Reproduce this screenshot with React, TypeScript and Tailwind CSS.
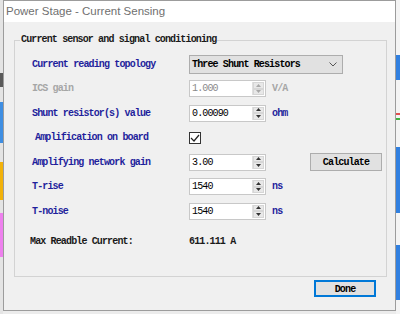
import React from 'react';

const mono = "font-['Liberation_Mono',monospace] text-[10px] tracking-[-0.86px]";

const Spinner: React.FC<{ disabled?: boolean }> = ({ disabled }) => (
  <div className="flex flex-col w-[12px] h-full border-l border-[#e0e0e0]">
    {['up', 'down'].map((dir) => (
      <div key={dir} className="flex-1 flex items-center justify-center bg-[#e8e8e8] border border-[#d6d6d6]">
        <svg width="5" height="3" viewBox="0 0 5 3">
          <path
            d={dir === 'up' ? 'M0 3 L2.5 0 L5 3 Z' : 'M0 0 L2.5 3 L5 0 Z'}
            fill={disabled ? '#a8a8a8' : '#333333'}
          />
        </svg>
      </div>
    ))}
  </div>
);

const NumberBox: React.FC<{ value: string; disabled?: boolean }> = ({ value, disabled }) => (
  <div className="flex w-[77px] h-[17px] bg-white border border-[#c8c8c8] pl-[2px] p-[1px]">
    <div className={`flex-1 flex items-center ${mono} ${disabled ? 'text-[#8a8a8a]' : 'text-black'}`}>{value}</div>
    <Spinner disabled={disabled} />
  </div>
);

const Label: React.FC<{ children: React.ReactNode; tone?: 'blue' | 'gray' | 'black'; indent?: boolean }> = ({ children, tone = 'blue', indent }) => (
  <div
    className={`w-[157px] shrink-0 font-bold ${mono} ${indent ? 'pl-[3px]' : ''} ${
      tone === 'blue' ? 'text-[#1f1f9c]' : tone === 'gray' ? 'text-[#a6a6a6]' : 'text-[#1a1a1a]'
    }`}
  >
    {children}
  </div>
);

const Unit: React.FC<{ children: React.ReactNode; gray?: boolean }> = ({ children, gray }) => (
  <span className={`ml-[6px] font-bold ${mono} ${gray ? 'text-[#a6a6a6]' : 'text-[#1f1f9c]'}`}>{children}</span>
);

const App: React.FC = () => {
  return (
    <div className="w-[400px] h-[314px] flex bg-[#ececec] overflow-hidden">
      {/* desktop behind, left side */}
      <div className="w-[3px] flex flex-col">
        <div className="h-[73px] bg-[#e4e4e4]" />
        <div className="h-[14px] bg-[#5a5a5a]" />
        <div className="h-[15px] bg-[#e4e4e4]" />
        <div className="h-[41px] bg-[#3f8ee2]" />
        <div className="h-[19px] bg-[#e4e4e4]" />
        <div className="h-[38px] bg-[#f2b20a]" />
        <div className="h-[13px] bg-[#e4e4e4]" />
        <div className="h-[44px] bg-[#ee80ee]" />
        <div className="flex-1 bg-[#e4e4e4]" />
      </div>

      {/* dialog */}
      <div className="w-[393px] h-[311px] flex flex-col border border-[#9c9c9c] bg-[#f0f0f0]">
        <div className="h-[21px] shrink-0 bg-white flex items-center pl-[2px]">
          <span className="font-['Liberation_Sans',sans-serif] text-[11.5px] text-[#707070] leading-none">
            Power Stage - Current Sensing
          </span>
        </div>

        <div className="relative mt-[18px] ml-[10px] w-[373px] h-[237px] border border-[#d3d3d3] flex flex-col pl-[17px] pt-[13px]">
          <span className={`absolute left-[5px] top-[-9px] px-[1px] bg-[#f0f0f0] font-bold text-[#1a1a1a] ${mono}`}>
            Current sensor and signal conditioning
          </span>

          <div className="flex flex-col gap-y-[4.5px]">
            <div className="h-[20px] flex items-center">
              <Label>Current reading topology</Label>
              <div className="w-[154px] h-[19px] flex items-center justify-between bg-[#e1e1e1] border border-[#adadad] pl-[2px] pr-[5px]">
                <span className={`font-bold text-black ${mono}`}>Three Shunt Resistors</span>
                <svg width="8" height="5" viewBox="0 0 8 5">
                  <path d="M0.5 0.5 L4 4 L7.5 0.5" fill="none" stroke="#555" strokeWidth="1" />
                </svg>
              </div>
            </div>

            <div className="h-[20px] flex items-center">
              <Label tone="gray">ICS gain</Label>
              <NumberBox value="1.000" disabled />
              <Unit gray>V/A</Unit>
            </div>

            <div className="h-[20px] flex items-center">
              <Label>Shunt resistor(s) value</Label>
              <NumberBox value="0.00090" />
              <Unit>ohm</Unit>
            </div>

            <div className="h-[20px] flex items-center">
              <Label indent>Amplification on board</Label>
              <div className="w-[12px] h-[12px] bg-white border border-[#333] flex items-center justify-center">
                <svg width="10" height="8" viewBox="0 0 10 8">
                  <path d="M1 4 L4 7 L9 1" fill="none" stroke="#222" strokeWidth="1.2" />
                </svg>
              </div>
            </div>

            <div className="h-[20px] flex items-center">
              <Label>Amplifying network gain</Label>
              <NumberBox value="3.00" />
              <button className={`ml-[44px] w-[72px] h-[18px] bg-[#e1e1e1] border border-[#adadad] font-bold text-black ${mono}`}>
                Calculate
              </button>
            </div>

            <div className="h-[20px] flex items-center">
              <Label>T-rise</Label>
              <NumberBox value="1540" />
              <Unit>ns</Unit>
            </div>

            <div className="h-[20px] flex items-center">
              <Label>T-noise</Label>
              <NumberBox value="1540" />
              <Unit>ns</Unit>
            </div>

            <div className="h-[20px] flex items-center mt-[6px] -ml-[2px]">
              <div className={`w-[159px] shrink-0 font-bold text-[#1a1a1a] ${mono}`}>Max Readble Current:</div>
              <span className={`font-bold text-[#1a1a1a] ${mono}`}>611.111 A</span>
            </div>
          </div>
        </div>

        <div className="flex justify-end pr-[19px] mt-[3px]">
          <button className={`w-[62px] h-[17px] bg-[#e1e1e1] border-2 border-[#0078d7] font-bold text-black ${mono}`}>
            Done
          </button>
        </div>
      </div>

      {/* desktop behind, right side */}
      <div className="w-[4px] flex flex-col">
        <div className="h-[55px] bg-[#f4f4f4]" />
        <div className="h-[25px] bg-[#3180e0]" />
        <div className="h-[33px] bg-[#f4f4f4]" />
        <div className="h-[2px] bg-[#e05050]" />
        <div className="h-[3px] bg-[#f4f4f4]" />
        <div className="h-[2px] bg-[#40b040]" />
        <div className="h-[27px] bg-[#f4f4f4]" />
        <div className="h-[66px] bg-[#3180e0]" />
        <div className="h-[32px] bg-[#f4f4f4]" />
        <div className="h-[55px] bg-[#3180e0]" />
        <div className="flex-1 bg-[#f4f4f4]" />
      </div>
    </div>
  );
};

export default App;
